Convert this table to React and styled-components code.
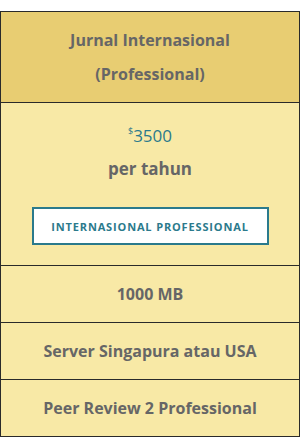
import styled, { createGlobalStyle } from "styled-components";

const Global = createGlobalStyle`
  body {
    margin: 0;
    background: #ffffff;
    font-family: "Open Sans", "Liberation Sans", sans-serif;
  }
`;

const Table = styled.div`
  margin-top: 11px;
  width: 300px;
  box-sizing: border-box;
  border: 1px solid #2a2a2a;
  background: #f8e9a6;
  color: #666666;
  text-align: center;
`;

const Header = styled.div`
  background: #e8cd72;
  padding: 11px 0;
  font-size: 16px;
  font-weight: 700;
  line-height: 34px;
`;

const PriceBox = styled.div`
  border-top: 1px solid #2a2a2a;
  padding: 21px 0 20px;
  display: flex;
  flex-direction: column;
  align-items: center;
`;

const Price = styled.div`
  color: #2b7a8c;
  font-size: 17px;
  line-height: 24px;

  sup {
    font-size: 9px;
    vertical-align: 8px;
    line-height: 0;
  }
`;

const Period = styled.div`
  margin-top: 9px;
  font-size: 17px;
  font-weight: 700;
  line-height: 24px;
`;

const Button = styled.button`
  margin-top: 26px;
  width: 237px;
  height: 38px;
  box-sizing: border-box;
  background: #ffffff;
  border: 2px solid #2b7a8c;
  color: #2b7a8c;
  font-family: inherit;
  font-size: 11px;
  font-weight: 700;
  letter-spacing: 0.85px;
  text-transform: uppercase;
  cursor: pointer;
`;

const Row = styled.div`
  border-top: 1px solid #2a2a2a;
  height: 56px;
  display: flex;
  align-items: center;
  justify-content: center;
  font-size: 16px;
  font-weight: 700;
`;

const features = ["1000 MB", "Server Singapura atau USA", "Peer Review 2 Professional"];

export default function App() {
  return (
    <>
      <Global />
      <Table>
        <Header>
          Jurnal Internasional
          <br />
          (Professional)
        </Header>
        <PriceBox>
          <Price>
            <sup>$</sup>3500
          </Price>
          <Period>per tahun</Period>
          <Button>Internasional Professional</Button>
        </PriceBox>
        {features.map((f) => (
          <Row key={f}>{f}</Row>
        ))}
      </Table>
    </>
  );
}
